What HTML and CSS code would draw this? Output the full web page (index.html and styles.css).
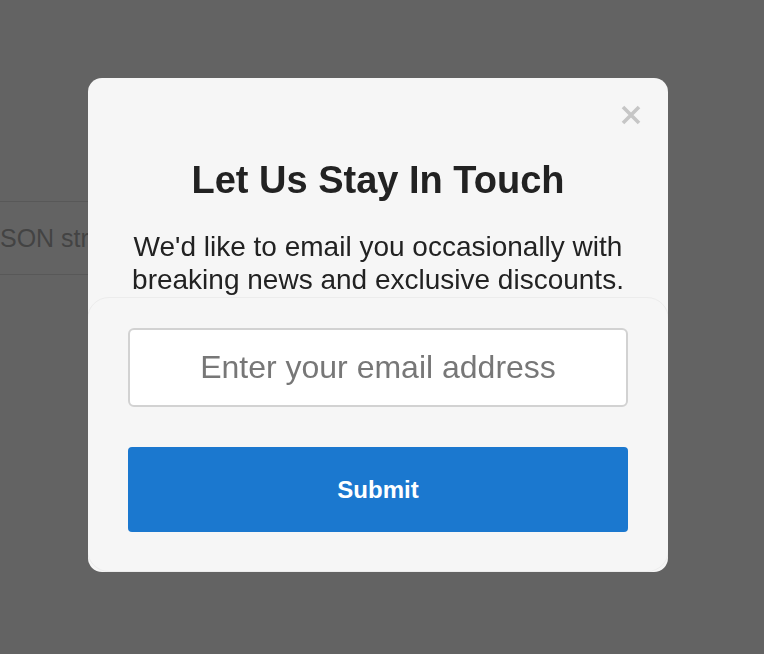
FILE: index.html
```html
<!DOCTYPE html>
<html>
<head>
<meta charset="utf-8">
<link rel="stylesheet" href="styles.css">
</head>
<body>
<div class="page">
  <div class="field">SON string</div>
</div>
<div class="overlay">
  <div class="modal">
    <button class="close" aria-label="Close">
      <svg width="20" height="20" viewBox="0 0 20 20"><path d="M2 2 L18 18 M18 2 L2 18" stroke="#c6c6c6" stroke-width="3.6" stroke-linecap="butt" fill="none"/></svg>
    </button>
    <h1 class="title">Let Us Stay In Touch</h1>
    <p class="lead">We'd like to email you occasionally with breaking news and exclusive discounts.</p>
    <form class="form">
      <input class="email" type="text" placeholder="Enter your email address">
      <button class="submit" type="button">Submit</button>
    </form>
  </div>
</div>
</body>
</html>
```
FILE: styles.css
```css
html, body {
  margin: 0;
  padding: 0;
}
body {
  width: 764px;
  height: 654px;
  overflow: hidden;
  background: #636363;
  font-family: "Liberation Sans", Arial, sans-serif;
}
.page {
  padding-top: 201px;
}
.field {
  width: 400px;
  height: 72px;
  border-top: 1px solid #585858;
  border-bottom: 1px solid #585858;
  padding-left: 0;
  font-size: 25px;
  line-height: 72px;
  color: #434343;
}
.overlay {
  position: fixed;
  inset: 0;
  display: flex;
  justify-content: flex-start;
  align-items: flex-start;
  padding: 78px 0 0 88px;
}
.modal {
  position: relative;
  width: 580px;
  box-sizing: border-box;
  background: #f6f6f6;
  border-radius: 14px;
  padding-top: 80px;
  text-align: center;
  overflow: hidden;
}
.close {
  position: absolute;
  top: 27px;
  right: 27px;
  width: 20px;
  height: 20px;
  padding: 0;
  border: 0;
  background: none;
  display: flex;
}
.title {
  margin: 0 0 28px;
  font-size: 38px;
  line-height: 44px;
  font-weight: bold;
  color: #222;
}
.lead {
  margin: 0 30px;
  font-size: 28px;
  line-height: 33px;
  color: #222;
}
.form {
  margin-top: 1px;
  padding: 30px 40px 39px;
  border: 1px solid #ececec;
  border-radius: 22px;
  margin-left: -1px;
  margin-right: -1px;
  display: flex;
  flex-direction: column;
  gap: 40px;
}
.email {
  height: 79px;
  box-sizing: border-box;
  border: 2px solid #d2d2d2;
  border-radius: 6px;
  background: #fff;
  font-family: "Liberation Sans", Arial, sans-serif;
  font-size: 32px;
  text-align: center;
  color: #333;
  outline: none;
}
.email::placeholder {
  color: #777;
}
.submit {
  height: 85px;
  border: 0;
  border-radius: 4px;
  background: #1b78cf;
  color: #fff;
  font-family: "Liberation Sans", Arial, sans-serif;
  font-size: 24px;
  font-weight: bold;
}
```
